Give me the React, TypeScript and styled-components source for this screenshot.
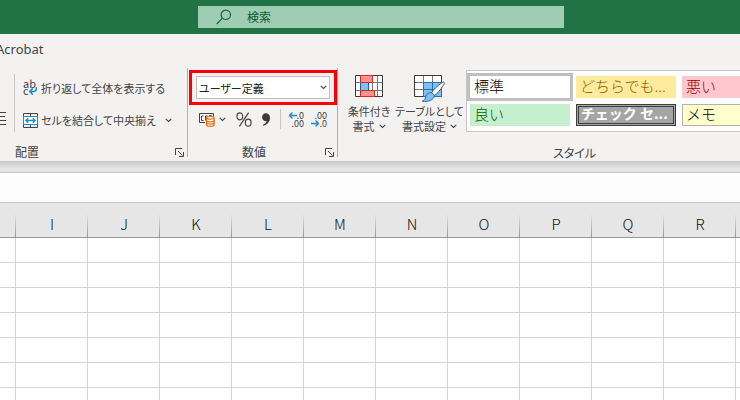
import React from "react";
import styled, { createGlobalStyle, css } from "styled-components";

const ui = '"Noto Sans CJK JP", "Noto Sans", sans-serif';

const GlobalStyle = createGlobalStyle`
  *, *::before, *::after { box-sizing: border-box; }
  body { margin: 0; background: #fff; font-family: ${ui}; font-size: 12px; color: #444; }
  button, input, select { font: inherit; color: inherit; }
`;

const Window = styled.div`
  height: 100vh;
  display: flex;
  flex-direction: column;
  overflow: hidden;
`;

const TitleBar = styled.header`
  display: grid;
  grid-template-columns: 198px minmax(0, 366px) 1fr;
  align-items: center;
  flex: none;
  height: 34px;
  background: #217346;
`;

const SearchBox = styled.label`
  grid-column: 2;
  display: flex;
  align-items: center;
  gap: 15px;
  height: 22px;
  padding-left: 18px;
  background: #9fcdb3;
  color: #0b5a2c;
`;

const SearchInput = styled.input`
  flex: 1;
  min-width: 0;
  height: 20px;
  margin-bottom: 2px;
  padding: 0;
  border: 0;
  outline: 0;
  background: transparent;
  &::placeholder { color: #0b5a2c; opacity: 1; }
`;

const Ribbon = styled.div`
  flex: none;
  background: #f3f2f1;
`;

const TabStrip = styled.nav`
  display: flex;
  align-items: center;
  height: 34px;
  padding-bottom: 4px;
  margin-left: -4px;
`;

const Tab = styled.button`
  padding: 0;
  border: 0;
  background: none;
  font-family: "Noto Sans", sans-serif;
  font-size: 13px;
  line-height: 20px;
`;

const Groups = styled.div`
  display: flex;
  height: 93px;
  overflow: hidden;
`;

const Divider = styled.div<{ $height: number }>`
  flex: none;
  width: 1px;
  height: ${(p) => p.$height}px;
  background: ${(p) => (p.$height > 80 ? "#b3b0ad" : "#c8c6c4")};
`;

const Group = styled.section<{ $width?: number }>`
  display: flex;
  flex-direction: column;
  flex: ${(p) => (p.$width ? `0 0 ${p.$width}px` : "1 1 0")};
  min-width: 0;
`;

const GroupBody = styled.div`
  display: flex;
  flex: 1;
  min-height: 0;
`;

const GroupFooter = styled.div<{ $indent: number }>`
  display: flex;
  align-items: center;
  justify-content: space-between;
  height: 18px;
  padding: 0 3px 0 ${(p) => p.$indent}px;
  line-height: 16px;
  font-feature-settings: "palt";
`;

const plain = css`
  display: flex;
  align-items: center;
  padding: 0;
  border: 0;
  background: none;
  white-space: nowrap;
  font-feature-settings: "palt";
`;

const IconButton = styled.button`
  ${plain}
`;

const Indent = styled.div`
  display: flex;
  align-items: flex-end;
  width: 14px;
  padding-bottom: 17px;
`;

const AlignPart = styled.div`
  display: flex;
  padding-top: 6px;
`;

const Commands = styled.div`
  display: flex;
  flex-direction: column;
  gap: 8px;
  padding: 8px 0 0 7px;
`;

const Command = styled.button`
  ${plain}
  gap: 3px;
  height: 24px;
  font-size: 11px;
  line-height: 24px;
`;

const CommandIcon = styled.span`
  display: flex;
  justify-content: flex-end;
  width: 16px;
`;

const CommandChevron = styled.span`
  display: flex;
  padding-left: 6px;
`;

const NumberBody = styled.div`
  flex: 1;
  padding: 2px 0 0 1px;
`;

const Highlight = styled.div`
  height: 35px;
  padding: 3px 4px;
  border: 3px solid #f00;
`;

const FormatField = styled.div`
  display: grid;
  align-items: center;
  height: 23px;
  border: 1px solid #c0c0c0;
  background: #fff;
  > * { grid-area: 1 / 1; }
  > svg { justify-self: end; margin-right: 2px; pointer-events: none; }
`;

const FormatSelect = styled.select`
  appearance: none;
  width: 100%;
  height: 21px;
  padding: 0 2px;
  border: 0;
  outline: 0;
  background: transparent;
  color: #222;
  font-size: 11px;
  font-feature-settings: "palt";
`;

const NumberTools = styled.div`
  display: flex;
  align-items: center;
  gap: 10px;
  height: 28px;
  padding-left: 9px;
`;

const ToolSet = styled.div<{ $gap: number }>`
  display: flex;
  align-items: center;
  gap: ${(p) => p.$gap}px;
`;

const StylesBody = styled.div`
  display: flex;
  flex: 1;
  gap: 2px;
  padding: 2px 0 11px 7px;
`;

const BigButton = styled.button`
  ${plain}
  flex: none;
  flex-direction: column;
  min-width: 48px;
  padding-top: 5px;
  font-size: 11px;
  line-height: 15px;
`;

const BigIcon = styled.span`
  display: flex;
  height: 29px;
`;

const BigLine = styled.span`
  display: flex;
  align-items: center;
  gap: 4px;
`;

const Gallery = styled.div`
  display: grid;
  flex: 1;
  grid-template-columns: repeat(3, 100px);
  grid-auto-rows: 22px;
  gap: 6px;
  height: 62px;
  min-width: 0;
  padding: 5px 3px;
  border: 1px solid #c8c6c4;
  border-right: 0;
  background: #fff;
  overflow: hidden;
`;

type CellKind = "normal" | "neutral" | "bad" | "good" | "check" | "note";

const kinds: Record<CellKind, ReturnType<typeof css>> = {
  normal: css`background: #fff; color: #000; outline: 3px solid #c0c0c0;`,
  neutral: css`background: #ffeb9c; color: #9c5700;`,
  bad: css`background: #ffc7ce; color: #9c0006;`,
  good: css`background: #c6efce; color: #006100;`,
  check: css`background: #a5a5a5; color: #fff; border: 3px double #3f3f3f; padding: 0 2px 4px; font-size: 14px; line-height: 12px; font-weight: 700;`,
  note: css`background: #ffffcc; color: #000; border: 1px solid #b2b2b2; padding: 0 3px 2px; line-height: 18px;`,
};

const StyleCell = styled.button<{ $kind: CellKind }>`
  display: block;
  min-width: 0;
  height: 22px;
  padding: 0 4px 3px;
  border: 0;
  text-align: left;
  font-size: 15px;
  font-weight: 300;
  line-height: 19px;
  white-space: nowrap;
  overflow: hidden;
  ${(p) => kinds[p.$kind]}
`;

const Shade = styled.div`
  flex: none;
  height: 11px;
  background: linear-gradient(#c9c9c9, #e4e4e4 70%, #e6e6e6);
`;

const FormulaInput = styled.input`
  flex: none;
  width: 100%;
  height: 31px;
  padding: 0 8px;
  border: solid #c3c3c3;
  border-width: 1px 0;
  border-radius: 0;
  outline: 0;
  background: #fdfdfd;
`;

const SheetArea = styled.main`
  flex: 1;
  min-height: 0;
  overflow: hidden;
  background: #fff;
`;

const Sheet = styled.table`
  table-layout: fixed;
  width: 1816px;
  border-spacing: 0;
`;

const EdgeCol = styled.col`
  width: 16px;
`;

const ColumnHead = styled.th`
  height: 35px;
  padding: 8px 0 0;
  border-bottom: 1px solid #999;
  background: linear-gradient(#e6e6e6, #999) right bottom / 1px 24px no-repeat #e6e6e6;
  color: #111;
  font-size: 15px;
  font-weight: 300;
  line-height: 20px;
`;

const Cell = styled.td`
  height: 25px;
  padding: 0;
  border: solid #d4d4d4;
  border-width: 0 1px 1px 0;
`;

const Chevron = () => (
  <svg width="7" height="5" viewBox="0 0 7 5" fill="none" stroke="#444" strokeWidth="1.1" aria-hidden="true">
    <path d="M.7.8 3.5 3.5 6.3.8" />
  </svg>
);

const Launcher = () => (
  <IconButton aria-label="詳細設定">
    <svg width="9" height="9" viewBox="0 0 9 9" fill="none" stroke="#444">
      <path d="M.5 7V.5H7M3 3l4.5 4.5M8.5 4v4.5H4" />
    </svg>
  </IconButton>
);

const SearchIcon = () => (
  <svg width="16" height="16" viewBox="0 0 16 16" fill="none" stroke="#17683a" strokeWidth="1.2" aria-hidden="true">
    <circle cx="9.8" cy="5.8" r="4.7" />
    <path d="M6.4 9.2.8 15" />
  </svg>
);

const LinesIcon = () => (
  <svg width="6" height="15" viewBox="0 0 6 15" stroke="#444" aria-hidden="true">
    <path d="M0 1.5h6M0 5.5h5M0 9.5h6M0 13.5h6" />
  </svg>
);

const WrapIcon = () => (
  <svg width="15" height="18" viewBox="0 0 15 18" fill="none" aria-hidden="true">
    <g fill="#444" fontFamily="Noto Sans CJK JP" fontSize="11">
      <text x="0" y="8.5">ab</text>
      <text x="0" y="16">c</text>
    </g>
    <path d="M13.3 8.2v1.6c0 1.8-1 2.7-2.7 2.7H7M9.8 9.4l-3.1 3.1 3.1 3.1" stroke="#1e8bcd" strokeWidth="1.5" />
  </svg>
);

const MergeIcon = () => (
  <svg width="15" height="15" viewBox="0 0 15 15" fill="none" aria-hidden="true">
    <path d="M.5 4V.5h14V4M.5 11v3.5h14V11M7.5.5V4M7.5 11v3.5" stroke="#444" />
    <path d="M.5 3.5h14v8H.5z" fill="#fff" stroke="#1e8bcd" />
    <path d="M3 7.5h9M5.2 5.2 2.9 7.5l2.3 2.3M9.8 5.2l2.3 2.3-2.3 2.3" stroke="#1e8bcd" strokeWidth="1.3" />
  </svg>
);

const CurrencyIcon = () => (
  <svg width="17" height="15" viewBox="0 0 17 15" fill="none" aria-hidden="true">
    <path d="M7 10.5H1.5v-9h14v3" stroke="#444" />
    <path d="M5.5 4H3.5v4.5h2M7.5 8.5V4h2v3M11.5 6V3.5h2" stroke="#444" />
    <path d="M8.5 6v6.7c0 .9 1.7 1.6 3.8 1.6s3.8-.7 3.8-1.6V6" fill="#fff" stroke="#df7316" strokeWidth="1.2" />
    <ellipse cx="12.3" cy="5.8" rx="3.8" ry="1.4" fill="#fff" stroke="#df7316" strokeWidth="1.2" />
    <path d="M8.5 8.2c0 .9 1.7 1.6 3.8 1.6s3.8-.7 3.8-1.6M8.5 10.5c0 .9 1.7 1.6 3.8 1.6s3.8-.7 3.8-1.6" stroke="#df7316" strokeWidth="1.2" />
  </svg>
);

const PercentIcon = () => (
  <svg width="16" height="15" viewBox="0 0 16 15" fill="none" stroke="#444" strokeWidth="1.2" aria-hidden="true">
    <ellipse cx="3.8" cy="4.3" rx="2.9" ry="3.5" />
    <ellipse cx="12.2" cy="10.7" rx="2.9" ry="3.5" />
    <path d="M12.6.6 3.4 14.4" />
  </svg>
);

const CommaIcon = () => (
  <svg width="8" height="13" viewBox="0 0 8 13" fill="#3b3a39" aria-hidden="true">
    <path d="M3.8.2C6.3.2 8 1.9 8 4.7c0 3.9-2.5 6.8-6.6 8.1l-.5-1c2.2-.9 3.400-2.100 3.700-3.700-.3.1-.6.1-1 .1C1.5 8.2.1 6.5.1 4.3.1 1.9 1.7.2 3.8.2z" />
  </svg>
);

const DecimalIcon = ({ increase }: { increase: boolean }) => (
  <svg width="16" height="17" viewBox="0 0 16 17" fill="none" aria-hidden="true">
    <g fill="#444" fontFamily="Noto Sans CJK JP" fontSize="9" textAnchor="end">
      <text x="16" y="8">{increase ? ".0" : ".00"}</text>
      <text x="16" y="16">{increase ? ".00" : ".0"}</text>
    </g>
    <path
      d={increase ? "M1.5 4.5H9M4.5 1.5l-3 3 3 3" : "M0 12.5h7.5M4.5 9.5l3 3-3 3"}
      stroke="#1e8bcd"
      strokeWidth="1.4"
    />
  </svg>
);

const ConditionalIcon = () => (
  <svg width="28" height="23" viewBox="0 0 28 23" fill="none" aria-hidden="true">
    <path d="M.5.5h27v21H.5z" fill="#fff" />
    <path d="M1 7.5h26M1 15.5h26M5.5 1v21M17.5 1v21M22.5 1v21" stroke="#777" />
    <path d="M.5.5h27v21H.5z" stroke="#3b3a39" />
    <path d="M5.5.5h12v7h-12zM5.5 15.5h14v6h-14z" fill="#ff9191" stroke="#e0261f" />
    <path d="M5.5 8h8v7h-8z" fill="#83beec" />
    <path d="M5.5 8v7M13.5 8v7" stroke="#0c64c0" />
  </svg>
);

const TableIcon = () => (
  <svg width="31" height="28" viewBox="0 0 31 28" fill="none" aria-hidden="true">
    <path d="M.5.5h27v21H.5z" fill="#fff" />
    <path d="M9.5 7.5h18v14h-18z" fill="#83beec" />
    <path d="M1 7.5h9M1 14.5h9M9.5 1v7M18.5 1v7" stroke="#777" />
    <path d="M.5.5h27v21H.5z" stroke="#3b3a39" />
    <path d="M9.5 21.5v-14h18v14zM9.5 14.5h18M18.5 7.5v14" stroke="#1b74bd" />
    <path d="M29.9 7.2c.8.7.2 2.2-.7 3.4-2.6 3.9-5.6 7.7-8.6 10l-3.1-3c2.4-3.5 6.1-6.7 9.9-9.5 1-.8 2-1.3 2.5-.9z" fill="#fff" stroke="#555" />
    <path d="M17.2 17.7c1.6.3 2.8 1.4 3.2 3-.5 4-5.5 6.5-12.2 5.5 3.2-.9 2.8-2.6 3.7-5 .9-2.3 2.9-3.7 5.3-3.5z" fill="#83beec" stroke="#1b74bd" />
  </svg>
);

const styleCells: { label: string; kind: CellKind }[] = [
  { label: "標準", kind: "normal" },
  { label: "どちらでも...", kind: "neutral" },
  { label: "悪い", kind: "bad" },
  { label: "良い", kind: "good" },
  { label: "チェック セ...", kind: "check" },
  { label: "メモ", kind: "note" },
];

const columnNames = "I J K L M N O P Q R S T U V W X Y Z AA AB AC AD AE AF AG".split(" ");
const rows = Array.from({ length: 40 }, (_, i) => i);

export default function App() {
  return (
    <Window>
      <GlobalStyle />
      <TitleBar>
        <SearchBox>
          <SearchIcon />
          <SearchInput type="text" placeholder="検索" aria-label="検索" />
        </SearchBox>
      </TitleBar>

      <Ribbon>
        <TabStrip>
          <Tab>Acrobat</Tab>
        </TabStrip>
        <Groups>
          <Group $width={187}>
            <GroupBody>
              <Indent>
                <IconButton aria-label="右揃え"><LinesIcon /></IconButton>
              </Indent>
              <AlignPart>
                <Divider $height={58} />
              </AlignPart>
              <Commands>
                <Command>
                  <CommandIcon><WrapIcon /></CommandIcon>
                  折り返して全体を表示する
                </Command>
                <Command>
                  <CommandIcon><MergeIcon /></CommandIcon>
                  セルを結合して中央揃え
                  <CommandChevron><Chevron /></CommandChevron>
                </Command>
              </Commands>
            </GroupBody>
            <GroupFooter $indent={15}>
              配置
              <Launcher />
            </GroupFooter>
          </Group>
          <Divider $height={89} />

          <Group $width={149}>
            <NumberBody>
              <Highlight>
                <FormatField>
                  <FormatSelect aria-label="表示形式" defaultValue="custom">
                    <option value="custom">ユーザー定義</option>
                  </FormatSelect>
                  <Chevron />
                </FormatField>
              </Highlight>
              <NumberTools>
                <ToolSet $gap={4}>
                  <IconButton aria-label="通貨表示形式"><CurrencyIcon /></IconButton>
                  <IconButton aria-label="その他の通貨"><Chevron /></IconButton>
                </ToolSet>
                <IconButton aria-label="パーセント"><PercentIcon /></IconButton>
                <IconButton aria-label="桁区切り"><CommaIcon /></IconButton>
                <ToolSet $gap={7}>
                  <Divider $height={20} />
                  <IconButton aria-label="小数点以下の表示桁数を増やす"><DecimalIcon increase /></IconButton>
                  <IconButton aria-label="小数点以下の表示桁数を減らす"><DecimalIcon increase={false} /></IconButton>
                </ToolSet>
              </NumberTools>
            </NumberBody>
            <GroupFooter $indent={54}>
              数値
              <Launcher />
            </GroupFooter>
          </Group>
          <Divider $height={89} />

          <Group>
            <StylesBody>
              <BigButton>
                <BigIcon><ConditionalIcon /></BigIcon>
                <BigLine>条件付き</BigLine>
                <BigLine>書式<Chevron /></BigLine>
              </BigButton>
              <BigButton>
                <BigIcon><TableIcon /></BigIcon>
                <BigLine>テーブルとして</BigLine>
                <BigLine>書式設定<Chevron /></BigLine>
              </BigButton>
              <Gallery>
                {styleCells.map((c) => (
                  <StyleCell key={c.label} $kind={c.kind}>{c.label}</StyleCell>
                ))}
              </Gallery>
            </StylesBody>
            <GroupFooter $indent={215}>スタイル</GroupFooter>
          </Group>
        </Groups>
      </Ribbon>

      <Shade />
      <FormulaInput type="text" aria-label="数式バー" />

      <SheetArea>
        <Sheet>
          <colgroup>
            <EdgeCol />
            {columnNames.map((c) => <col key={c} />)}
          </colgroup>
          <thead>
            <tr>
              <ColumnHead aria-label="H" />
              {columnNames.map((c) => <ColumnHead key={c} scope="col">{c}</ColumnHead>)}
            </tr>
          </thead>
          <tbody>
            {rows.map((r) => (
              <tr key={r}>
                <Cell />
                {columnNames.map((c) => <Cell key={c} />)}
              </tr>
            ))}
          </tbody>
        </Sheet>
      </SheetArea>
    </Window>
  );
}
